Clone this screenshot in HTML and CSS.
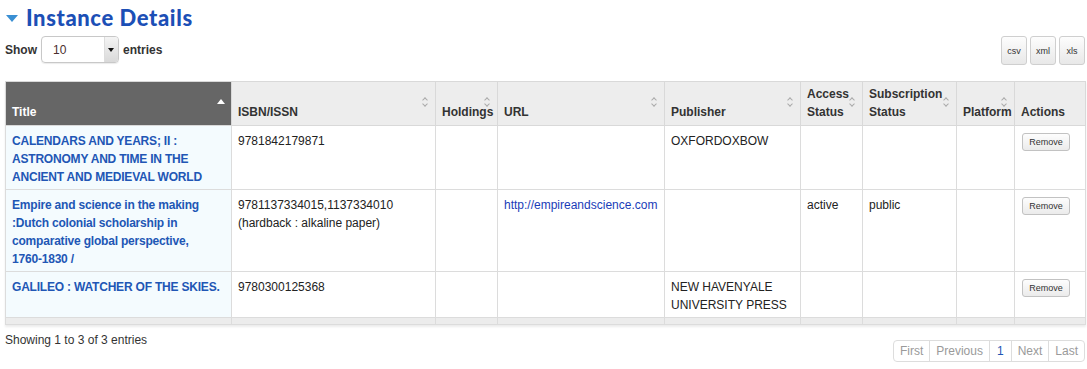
FILE: index.html
```html
<!DOCTYPE html>
<html lang="en">
<head>
    <meta charset="UTF-8">
    <title>Instance Details</title>
    <link rel="stylesheet" href="styles.css">
</head>
<body>
<div class="panel">
    <h2 class="section-title"><span class="caret"></span>Instance Details</h2>

    <div class="toolbar">
        <label class="length">Show
            <span class="select"><span class="select-value">10</span><span class="select-arrow"></span></span>
            entries</label>
        <div class="exports">
            <button class="export">csv</button>
            <button class="export">xml</button>
            <button class="export">xls</button>
        </div>
    </div>

    <table class="grid">
        <colgroup>
            <col style="width:226px"><col style="width:204px"><col style="width:62px">
            <col style="width:167px"><col style="width:136px"><col style="width:62px">
            <col style="width:94px"><col style="width:58px"><col style="width:71px">
        </colgroup>
        <thead>
            <tr>
                <th class="sorted">Title<span class="sort-up"></span></th>
                <th>ISBN/ISSN<span class="sort"></span></th>
                <th>Holdings<span class="sort"></span></th>
                <th>URL<span class="sort"></span></th>
                <th>Publisher<span class="sort"></span></th>
                <th>Access Status<span class="sort"></span></th>
                <th>Subscription Status<span class="sort"></span></th>
                <th>Platform<span class="sort"></span></th>
                <th>Actions</th>
            </tr>
        </thead>
        <tbody>
            <tr>
                <td class="title"><a href="#">CALENDARS AND YEARS; II : ASTRONOMY AND TIME IN THE ANCIENT AND MEDIEVAL WORLD</a></td>
                <td>9781842179871</td>
                <td></td>
                <td></td>
                <td>OXFORDOXBOW</td>
                <td></td>
                <td></td>
                <td></td>
                <td><button class="remove">Remove</button></td>
            </tr>
            <tr>
                <td class="title"><a href="#">Empire and science in the making :Dutch colonial scholarship in comparative global perspective, <span class="nowrap">1760-1830 /</span></a></td>
                <td>9781137334015,1137334010 (hardback : alkaline paper)</td>
                <td></td>
                <td><a class="url" href="#">http://empireandscience.com</a></td>
                <td></td>
                <td>active</td>
                <td>public</td>
                <td></td>
                <td><button class="remove">Remove</button></td>
            </tr>
            <tr>
                <td class="title"><a href="#">GALILEO : WATCHER OF THE SKIES.</a></td>
                <td>9780300125368</td>
                <td></td>
                <td></td>
                <td>NEW HAVENYALE UNIVERSITY PRESS</td>
                <td></td>
                <td></td>
                <td></td>
                <td><button class="remove">Remove</button></td>
            </tr>
        </tbody>
        <tfoot>
            <tr><td></td><td></td><td></td><td></td><td></td><td></td><td></td><td></td><td></td></tr>
        </tfoot>
    </table>

    <div class="footer">
        <div class="info">Showing 1 to 3 of 3 entries</div>
        <div class="pager">
            <span class="page">First</span>
            <span class="page">Previous</span>
            <span class="page current">1</span>
            <span class="page">Next</span>
            <span class="page">Last</span>
        </div>
    </div>
</div>
</body>
</html>
```

FILE: styles.css
```css
html {
    background: #fff;
    color: #333;
    font-family: 'Liberation Sans', Arial, Helvetica, sans-serif;
    font-size: 12px;
}

body {
    margin: 0;
}

.panel {
    padding: 0 2px 0 5px;
}

.section-title {
    display: flex;
    align-items: center;
    margin: 0;
    padding-top: 2px;
    height: 30px;
    font-family: Lato, 'Open Sans', sans-serif;
    font-weight: 900;
    font-size: 22px;
    letter-spacing: 0.6px;
    color: #1c4fb6;
}

.caret {
    width: 0;
    height: 0;
    margin: 2px 8px 0 1px;
    border-left: 6px solid transparent;
    border-right: 6px solid transparent;
    border-top: 7px solid #3a8fd3;
}

.toolbar {
    display: flex;
    justify-content: space-between;
    align-items: flex-start;
    margin-top: 4px;
    height: 45px;
}

.length {
    display: flex;
    align-items: center;
    gap: 4px;
    font-weight: bold;
}

.select {
    display: flex;
    width: 76px;
    height: 25px;
    border: 1px solid #c8c8c8;
    border-radius: 4px;
    overflow: hidden;
    box-shadow: 0 1px 1px rgba(0, 0, 0, 0.08);
    font-weight: normal;
}

.select-value {
    flex: 1;
    padding: 6px 0 0 11px;
    color: #4a2e2e;
}

.select-arrow {
    position: relative;
    width: 13px;
    background: linear-gradient(#f4f4f4, #d9d9d9);
    border-left: 1px solid #ddd;
}

.select-arrow::after {
    content: "";
    position: absolute;
    left: 3px;
    top: 11px;
    border-left: 3px solid transparent;
    border-right: 3px solid transparent;
    border-top: 4px solid #111;
}

.exports {
    display: flex;
    gap: 3px;
}

.export {
    width: 26px;
    height: 29px;
    padding: 0;
    border: 1px solid #cfcfcf;
    border-radius: 3px;
    background: linear-gradient(#fdfdfd, #e8e8e8);
    color: #333;
    font-family: inherit;
    font-size: 9px;
}

.grid {
    width: 1080px;
    table-layout: fixed;
    border-collapse: collapse;
    border: 1px solid #d6d6d6;
    box-shadow: 0 2px 2px rgba(0, 0, 0, 0.08);
}

.grid th {
    position: relative;
    padding: 3px 6px 4px;
    vertical-align: bottom;
    text-align: left;
    line-height: 18px;
    background: #ededed;
    border: 1px solid #d9d9d9;
    color: #333;
}

.grid th.sorted {
    background: #666;
    color: #fff;
}

.sort,
.sort-up {
    position: absolute;
    right: 6px;
    top: 15px;
    width: 7px;
    height: 10px;
}

.sort::before,
.sort::after {
    content: "";
    position: absolute;
    left: 1px;
    width: 3px;
    height: 3px;
    border-left: 1px solid #aaa;
    border-top: 1px solid #aaa;
}

.sort::before {
    top: 1px;
    transform: rotate(45deg);
}

.sort::after {
    top: 5px;
    transform: rotate(225deg);
}

.sort-up {
    top: 17px;
    width: 0;
    height: 0;
    border-left: 4px solid transparent;
    border-right: 4px solid transparent;
    border-bottom: 5px solid #fff;
}

.grid td {
    padding: 6px 6px 3px;
    vertical-align: top;
    line-height: 18px;
    border: 1px solid #dcdcdc;
    color: #222;
}

.grid td.title {
    background: #f4fbfe;
}

.grid td.title a {
    color: #2156b5;
    font-weight: bold;
    letter-spacing: -0.2px;
    text-decoration: none;
}

.nowrap {
    white-space: nowrap;
}

.grid a.url {
    color: #1a3cb8;
    text-decoration: none;
}

.grid tfoot td {
    height: 6px;
    padding: 0;
    background: #ececec;
}

.remove {
    margin: 1px 0 0 1px;
    width: 48px;
    height: 18px;
    padding: 0;
    border: 1px solid #c2c2c2;
    border-radius: 3px;
    background: linear-gradient(#fdfdfd, #ebebeb);
    color: #333;
    font-family: inherit;
    font-size: 9px;
}

.footer {
    display: flex;
    justify-content: space-between;
    align-items: flex-start;
    margin-top: 7px;
}

.info {
    line-height: 16px;
}

.pager {
    display: flex;
    margin-top: 8px;
    border: 1px solid #ddd;
    border-radius: 4px;
}

.page {
    padding: 0 6px;
    line-height: 20px;
    color: #9a9a9a;
    border-left: 1px solid #ddd;
}

.page:first-child {
    border-left: 0;
}

.page.current {
    color: #1f55b5;
    padding: 0 7px;
}
```
